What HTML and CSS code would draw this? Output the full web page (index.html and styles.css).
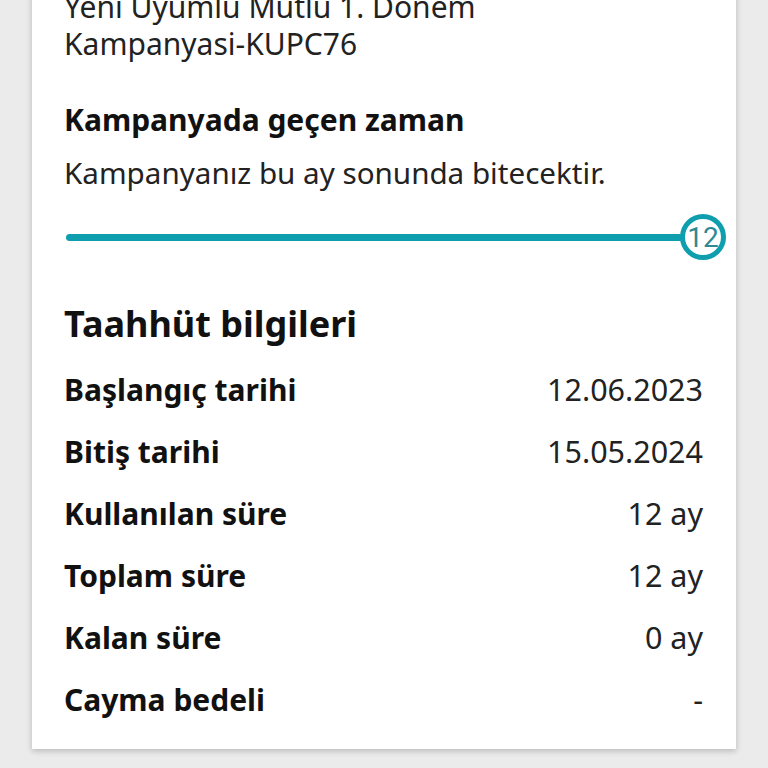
FILE: index.html
```html
<!DOCTYPE html>
<html lang="tr">
<head>
<meta charset="utf-8">
<link rel="stylesheet" href="styles.css">
</head>
<body>
<div class="page">
  <section class="card">
    <p class="campaign-name">Yeni Uyumlu Mutlu 1. Dönem<br>Kampanyasi-KUPC76</p>

    <h3 class="sub-title">Kampanyada geçen zaman</h3>
    <p class="sub-text">Kampanyanız bu ay sonunda bitecektir.</p>

    <div class="progress">
      <div class="progress-track"></div>
      <div class="progress-badge">12</div>
    </div>

    <h2 class="section-title">Taahhüt bilgileri</h2>
    <dl class="info-list">
      <div class="info-row"><dt>Başlangıç tarihi</dt><dd>12.06.2023</dd></div>
      <div class="info-row"><dt>Bitiş tarihi</dt><dd>15.05.2024</dd></div>
      <div class="info-row"><dt>Kullanılan süre</dt><dd>12 ay</dd></div>
      <div class="info-row"><dt>Toplam süre</dt><dd>12 ay</dd></div>
      <div class="info-row"><dt>Kalan süre</dt><dd>0 ay</dd></div>
      <div class="info-row"><dt>Cayma bedeli</dt><dd>-</dd></div>
    </dl>
  </section>
</div>
</body>
</html>
```

FILE: styles.css
```css
html, body {
  margin: 0;
  padding: 0;
  background: #ebebeb;
  font-family: "Noto Sans", "Open Sans", sans-serif;
  color: #111;
}

.page {
  padding: 0 32px 20px;
}

.card {
  margin-top: -12px;
  background: #fff;
  padding: 0 33px 19px 32px;
  box-shadow: 0 2px 6px rgba(0,0,0,0.22);
}

.campaign-name {
  margin: 0;
  font-size: 30px;
  line-height: 37px;
  color: #222;
}

.sub-title {
  margin: 40px 0 0;
  font-size: 30px;
  font-weight: 700;
  line-height: 36px;
}

.sub-text {
  margin: 17px 0 0;
  font-size: 29.6px;
  line-height: 36px;
  color: #222;
}

.progress {
  position: relative;
  margin-top: 23px;
  margin-left: 2px;
  height: 46px;
  display: flex;
  align-items: center;
}

.progress-track {
  flex: 1;
  height: 7px;
  border-radius: 4px;
  background: #0e9ead;
  margin-right: 20px;
}

.progress-badge {
  position: absolute;
  right: -23px;
  top: 0;
  width: 36px;
  height: 36px;
  border: 5px solid #0e9ead;
  border-radius: 50%;
  background: #fff;
  color: #2f8994;
  font-size: 28px;
  line-height: 37px;
  text-align: center;
  font-family: "Roboto", "Noto Sans", sans-serif;
}

.section-title {
  margin: 42px 0 0;
  font-size: 36px;
  font-weight: 700;
  line-height: 44px;
}

.info-list {
  margin: 12px 0 0;
}

.info-row {
  display: flex;
  justify-content: space-between;
  align-items: baseline;
  height: 62px;
  line-height: 62px;
}

.info-row dt {
  font-size: 30px;
  font-weight: 700;
}

.info-row dd {
  margin: 0;
  font-size: 30.5px;
  color: #222;
}
```
